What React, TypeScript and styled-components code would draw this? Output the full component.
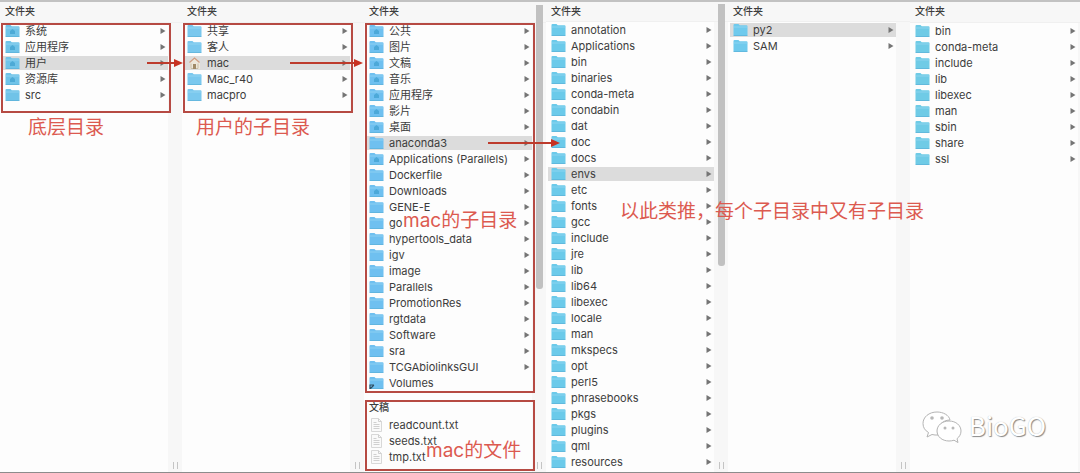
import React from "react";
import styled, { createGlobalStyle } from "styled-components";

const GlobalStyle = createGlobalStyle`
  * { box-sizing: border-box; }
  body {
    margin: 0;
    background: #fdfdfd;
    color: #3c3c3c;
    font-family: Inter, "Noto Sans CJK SC", sans-serif;
    font-size: 11px;
  }
`;

const Browser = styled.main`
  position: relative;
  display: grid;
  grid-template-columns: repeat(5, 182fr) 170fr;
  min-height: 100vh;
  overflow: hidden;
  border-top: 2px solid #c2c2c2;
  border-bottom: 1px solid #8c8c8c;
`;

const ColumnBox = styled.section`
  display: grid;
  grid-template-columns: minmax(0, 1fr) auto;
  grid-template-rows: auto 1fr;
`;

const Heading = styled.h2<{ $tight?: boolean }>`
  grid-column: 1 / -1;
  height: ${(p) => (p.$tight ? 20 : 21)}px;
  margin: 0;
  padding: 0 5px;
  background: #f7f7f7;
  border-bottom: 1px solid #f0f0f0;
  font-size: 10px;
  font-weight: 500;
  line-height: 18px;
`;

const Gutter = styled.div<{ $slim?: boolean }>`
  position: relative;
  width: ${(p) => (p.$slim ? 2 : 14)}px;
  background: #f7f7f7;
`;

const Scrollbar = styled.div<{ $height: number }>`
  position: absolute;
  top: -18px;
  right: 3px;
  width: 7px;
  height: ${(p) => p.$height}px;
  border-radius: 0 0 3px 3px;
  background: #c1c1c1;
`;

const Grip = styled.div`
  position: absolute;
  right: 4px;
  bottom: 3px;
  width: 5px;
  height: 7px;
  border: solid #c4c4c4;
  border-width: 0 1px;
`;

const Group = styled.div<{ $framed?: boolean; $pad?: number; $gap?: number }>`
  position: relative;
  padding-bottom: ${(p) => p.$pad ?? 0}px;
  margin-top: ${(p) => p.$gap ?? 0}px;

  &::after {
    content: "";
    display: ${(p) => (p.$framed ? "block" : "none")};
    position: absolute;
    z-index: 1;
    inset: 0 -3px 0 1px;
    border: 2px solid #b64a43;
    pointer-events: none;
  }
`;

const GroupTitle = styled.h3`
  margin: 0;
  padding: 0 5px;
  height: 17px;
  font-size: 10px;
  font-weight: 500;
  line-height: 15px;
`;

const List = styled.ul`
  margin: 0;
  padding: 0;
  list-style: none;
`;

const Item = styled.li`
  position: relative;
`;

const Row = styled.button<{ $selected?: boolean }>`
  display: flex;
  align-items: center;
  gap: 5px;
  width: 100%;
  height: 16px;
  padding: 0 2px 0 5px;
  border: 0;
  background: ${(p) =>
    p.$selected ? "linear-gradient(#dcdcdc, #dcdcdc) 2px 1px / 100% 14px no-repeat" : "transparent"};
  color: inherit;
  font: inherit;
  line-height: 16px;
  text-align: left;
  white-space: nowrap;
`;

const Name = styled.span`
  flex: 1;
`;

const Note = styled.p<{ $x: number; $y: number }>`
  position: absolute;
  z-index: 3;
  left: ${(p) => p.$x}px;
  top: ${(p) => p.$y}px;
  margin: 0;
  color: #dc5a50;
  font-size: 19px;
  line-height: 24px;
  white-space: nowrap;
  pointer-events: none;
`;

const ArrowSvg = styled.svg`
  position: absolute;
  z-index: 2;
  top: 4px;
  right: -28px;
  pointer-events: none;
`;

const Watermark = styled.div`
  position: absolute;
  right: 34px;
  bottom: 25px;
  display: flex;
  align-items: center;
  gap: 7px;
  color: #fff;
  font-family: "Noto Sans CJK SC", sans-serif;
  font-size: 26px;
  line-height: 38px;
  text-shadow: 1px 1px 1px #8a8a8a, 0 0 1px #bbb;
`;

const WatermarkName = styled.span`
  padding-bottom: 3px;
`;

type IconKind = "folder" | "marked" | "home" | "file" | "alias";

function EntryIcon({ kind, color }: { kind: IconKind; color: string }) {
  if (kind === "home") {
    return (
      <svg width="15" height="14" viewBox="0 0 15 14" aria-hidden="true">
        <path d="M2 7 7.5 1.5 13 7v6H3V7z" fill="#eee7da" />
        <path d="M2.500 6.500 7.500 2l5 4.500" fill="none" stroke="#cf9c80" strokeWidth="1.200" />
        <path d="M4 7.5v5h7v-5" fill="none" stroke="#c9bda6" />
        <path d="M6 8h3v5H6z" fill="#a18a66" />
      </svg>
    );
  }
  if (kind === "file") {
    return (
      <svg width="15" height="14" viewBox="0 0 15 14" aria-hidden="true">
        <path d="M2.5.5h7l3 3v10h-10z" fill="#fafafa" stroke="#d8d8d8" />
        <path d="M9.5.5v3h3M4.5 4.5h3m-3 2h6m-6 2h6m-6 2h6" fill="none" stroke="#d0d0d0" />
      </svg>
    );
  }
  return (
    <svg width="15" height="14" viewBox="0 0 15 14" aria-hidden="true">
      <path d="M.5 2q0-1 1-1h4l1.2 1.2H13.500q1 0 1 1V12q0 1-1 1h-12q-1 0-1-1z" fill={color} />
      <path d="M.5 4h14" stroke="#a4dcf5" strokeWidth="1" opacity=".6" />
      <path d="M.5 12.500h14" stroke="#58aed6" strokeWidth="1" opacity=".6" />
      {kind === "marked" && <path d="M5 10V7l2.500-2L10 7v3z" fill="#3f9fce" opacity=".7" />}
      {kind === "alias" && <path d="M1 13V9h4M1.500 12.500 5 9" fill="none" stroke="#2f4f63" strokeWidth="1.200" />}
    </svg>
  );
}

function Disclosure() {
  return (
    <svg width="6" height="8" viewBox="0 0 6 8" aria-hidden="true">
      <path d="M.5 1v6l5-3z" fill="#757575" />
    </svg>
  );
}

function Arrow({ length, shift }: { length: number; shift: number }) {
  return (
    <ArrowSvg width={length + shift} height="8" viewBox={`0 0 ${length + shift} 8`} aria-hidden="true">
      <path d={`M0 4H${length - 6}`} stroke="#bd3b2c" strokeWidth="2" />
      <path d={`M${length - 9} 0v8l9-4z`} fill="#c83222" />
    </ArrowSvg>
  );
}

type Entry = { name: string; kind?: IconKind; leaf?: boolean; selected?: boolean; arrow?: [number, number] };

function Entries({ items, color }: { items: Entry[]; color: string }) {
  return (
    <List>
      {items.map((e) => (
        <Item key={e.name}>
          <Row type="button" $selected={e.selected}>
            <EntryIcon kind={e.kind ?? "folder"} color={color} />
            <Name>{e.name}</Name>
            {!e.leaf && <Disclosure />}
          </Row>
          {e.arrow && <Arrow length={e.arrow[0]} shift={e.arrow[1]} />}
        </Item>
      ))}
    </List>
  );
}

type ColumnProps = { tight?: boolean; scroll?: number; last?: boolean; children: React.ReactNode };

function Column({ tight, scroll, last, children }: ColumnProps) {
  return (
    <ColumnBox>
      <Heading $tight={tight}>文件夹</Heading>
      <div>{children}</div>
      <Gutter $slim={last}>
        {scroll && <Scrollbar $height={scroll} />}
        {!last && <Grip />}
      </Gutter>
    </ColumnBox>
  );
}

const plain = (names: string): Entry[] => names.split(" ").map((name) => ({ name }));
const marked = (names: string): Entry[] => names.split(" ").map((name) => ({ name, kind: "marked" }));

const root: Entry[] = [
  ...marked("系统 应用程序"),
  { name: "用户", kind: "marked", selected: true, arrow: [36, 13] },
  { name: "资源库", kind: "marked" },
  { name: "src" },
];

const users: Entry[] = [
  ...plain("共享 客人"),
  { name: "mac", kind: "home", selected: true, arrow: [73, 15] },
  ...plain("Mac_r40 macpro"),
];

const home: Entry[] = [
  ...marked("公共 图片 文稿 音乐 应用程序 影片 桌面"),
  { name: "anaconda3", selected: true, arrow: [72, 0] },
  { name: "Applications (Parallels)", kind: "marked" },
  { name: "Dockerfile" },
  { name: "Downloads", kind: "marked" },
  ...plain("GENE-E go hypertools_data igv image Parallels PromotionRes rgtdata Software sra TCGAbiolinksGUI"),
  { name: "Volumes", kind: "alias", leaf: true },
];

const documents: Entry[] = ["readcount.txt", "seeds.txt", "tmp.txt"].map((name) => ({
  name,
  kind: "file",
  leaf: true,
}));

const anaconda: Entry[] = [
  ...plain("annotation Applications bin binaries conda-meta condabin dat doc docs"),
  { name: "envs", selected: true },
  ...plain(
    "etc fonts gcc include jre lib lib64 libexec locale man mkspecs opt perl5 phrasebooks pkgs plugins qml resources"
  ),
];

const envs: Entry[] = [{ name: "py2", selected: true }, { name: "SAM" }];
const py2 = plain("bin conda-meta include lib libexec man sbin share ssl");

export default function App() {
  return (
    <>
      <GlobalStyle />
      <Browser>
        <Column>
          <Group $framed $pad={10}>
            <Entries items={root} color="#70c3e8" />
            <Note $x={28} $y={93}>底层目录</Note>
          </Group>
        </Column>
        <Column>
          <Group $framed $pad={10}>
            <Entries items={users} color="#7ac8ee" />
            <Note $x={14} $y={93}>用户的子目录</Note>
          </Group>
        </Column>
        <Column scroll={284}>
          <Group $framed $pad={2}>
            <Entries items={home} color="#6fc0f0" />
            <Note $x={39} $y={186}>mac的子目录</Note>
          </Group>
          <Group $framed $pad={6} $gap={7}>
            <GroupTitle>文稿</GroupTitle>
            <Entries items={documents} color="#fff" />
            <Note $x={62} $y={39}>mac的文件</Note>
          </Group>
        </Column>
        <Column tight scroll={262}>
          <Group>
            <Entries items={anaconda} color="#6bcaea" />
            <Note $x={74} $y={178}>以此类推，每个子目录中又有子目录</Note>
          </Group>
        </Column>
        <Column tight>
          <Entries items={envs} color="#6fcaed" />
        </Column>
        <Column last>
          <Entries items={py2} color="#6fcbe6" />
        </Column>
        <Watermark>
          <svg width="40" height="34" viewBox="0 0 40 34" aria-hidden="true">
            <g fill="#fff" stroke="#b4b4b4" strokeWidth="1">
              <path d="M15 2C7 2 1 7 1 13.500c0 4 2 7 5.500 9L5 27l5-2.500c2 .5 4 .7 6 .5C14 17 20 10 28 10 27 5 21 2 15 2z" />
              <path d="M27 11c-7 0-12 4.500-12 10s5 10 12 10c2 0 3.500-.3 5-.8l4 2.300-1-3.800c2.500-2 4-4.500 4-7.700 0-5.500-5-10-12-10z" />
            </g>
            <g fill="#b8b8b8">
              <circle cx="10" cy="8" r="1.800" />
              <circle cx="20" cy="8" r="1.800" />
              <circle cx="23" cy="18" r="1.500" />
              <circle cx="31" cy="18" r="1.500" />
            </g>
          </svg>
          <WatermarkName>BioGO</WatermarkName>
        </Watermark>
      </Browser>
    </>
  );
}
